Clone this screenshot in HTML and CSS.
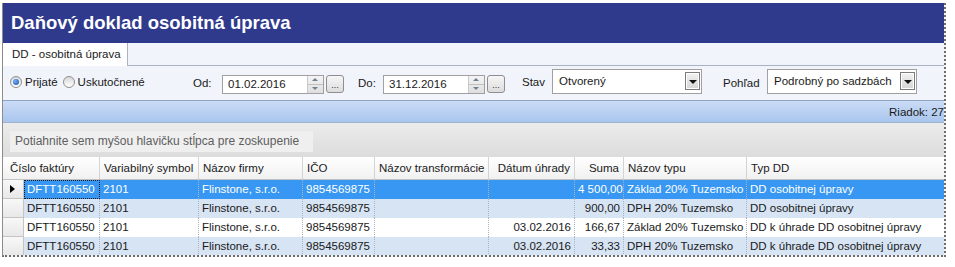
FILE: index.html
```html
<!DOCTYPE html>
<html lang="sk">
<head>
    <meta charset="UTF-8">
    <title>Daňový doklad osobitná úprava</title>
    <link rel="stylesheet" href="styles.css">
</head>
<body>
    <div class="window">
        <div class="title-bar">Daňový doklad osobitná úprava</div>

        <div class="tabs">
            <div class="tab">DD - osobitná úprava</div>
        </div>

        <div class="filters">
            <div class="radios">
                <label class="radio"><span class="dot checked"></span>Prijaté</label>
                <label class="radio"><span class="dot"></span>Uskutočnené</label>
            </div>

            <span class="lbl lbl-od">Od:</span>
            <div class="date-box">
                <span class="date-text">01.02.2016</span>
                <span class="spin"><i class="up"></i><i class="down"></i></span>
            </div>
            <button class="dots">...</button>

            <span class="lbl lbl-do">Do:</span>
            <div class="date-box">
                <span class="date-text">31.12.2016</span>
                <span class="spin"><i class="up"></i><i class="down"></i></span>
            </div>
            <button class="dots">...</button>

            <span class="lbl lbl-stav">Stav</span>
            <div class="combo">
                <span>Otvorený</span>
                <span class="drop"><i></i></span>
            </div>

            <span class="lbl lbl-pohlad">Pohľad</span>
            <div class="combo">
                <span>Podrobný po sadzbách</span>
                <span class="drop"><i></i></span>
            </div>
        </div>

        <div class="status-bar">Riadok: 27</div>

        <div class="group-panel">
            <div class="group-box">Potiahnite sem myšou hlavičku stĺpca pre zoskupenie</div>
        </div>

        <div class="grid">
            <div class="grid-head">
                <div class="hcell first">Číslo faktúry</div>
                <div class="hcell">Variabilný symbol</div>
                <div class="hcell">Názov firmy</div>
                <div class="hcell">IČO</div>
                <div class="hcell">Názov transformácie</div>
                <div class="hcell right">Dátum úhrady</div>
                <div class="hcell right">Suma</div>
                <div class="hcell">Názov typu</div>
                <div class="hcell">Typ DD</div>
            </div>

            <div class="grid-row selected">
                <div class="ind"><i class="arrow"></i></div>
                <div class="cell focus">DFTT160550</div>
                <div class="cell">2101</div>
                <div class="cell">Flinstone, s.r.o.</div>
                <div class="cell">9854569875</div>
                <div class="cell"></div>
                <div class="cell right"></div>
                <div class="cell right">4 500,00</div>
                <div class="cell">Základ 20% Tuzemsko</div>
                <div class="cell">DD osobitnej úpravy</div>
            </div>
            <div class="grid-row alt">
                <div class="ind"></div>
                <div class="cell">DFTT160550</div>
                <div class="cell">2101</div>
                <div class="cell">Flinstone, s.r.o.</div>
                <div class="cell">9854569875</div>
                <div class="cell"></div>
                <div class="cell right"></div>
                <div class="cell right">900,00</div>
                <div class="cell">DPH 20% Tuzemsko</div>
                <div class="cell">DD osobitnej úpravy</div>
            </div>
            <div class="grid-row">
                <div class="ind"></div>
                <div class="cell">DFTT160550</div>
                <div class="cell">2101</div>
                <div class="cell">Flinstone, s.r.o.</div>
                <div class="cell">9854569875</div>
                <div class="cell"></div>
                <div class="cell right">03.02.2016</div>
                <div class="cell right">166,67</div>
                <div class="cell">Základ 20% Tuzemsko</div>
                <div class="cell">DD k úhrade DD osobitnej úpravy</div>
            </div>
            <div class="grid-row alt">
                <div class="ind"></div>
                <div class="cell">DFTT160550</div>
                <div class="cell">2101</div>
                <div class="cell">Flinstone, s.r.o.</div>
                <div class="cell">9854569875</div>
                <div class="cell"></div>
                <div class="cell right">03.02.2016</div>
                <div class="cell right">33,33</div>
                <div class="cell">DPH 20% Tuzemsko</div>
                <div class="cell">DD k úhrade DD osobitnej úpravy</div>
            </div>
        </div>
    </div>
</body>
</html>
```

FILE: styles.css
```css
body {
    margin: 0;
    background-color: #ffffff;
    font-family: 'Liberation Sans', Arial, sans-serif;
    font-size: 11.5px;
    color: #1a1a1a;
}

.window {
    margin: 3px 0 0 2px;
    width: 941px;
    height: 252px;
    overflow: hidden;
    border-left: 1px solid #8c8c8c;
    border-right: 2px dotted #6d6d6d;
    border-bottom: 2px dotted #6d6d6d;
    background-color: #f1f4fa;
}

.title-bar {
    height: 40px;
    line-height: 40px;
    padding-left: 8px;
    background-color: #2f3a8d;
    color: #ffffff;
    font-size: 18.5px;
    font-weight: bold;
}

/* zalozky */
.tabs {
    display: flex;
    height: 22px;
    border-bottom: 1px solid #a9b3c4;
}

.tab {
    background-color: #ffffff;
    border-right: 1px solid #a9b3c4;
    padding: 0 6px 0 9px;
    line-height: 23px;
    height: 23px;
}

/* filtre */
.filters {
    display: flex;
    align-items: center;
    height: 34px;
    border-bottom: 1px solid #8ea3c2;
    padding-left: 7px;
}

.radios {
    display: flex;
    width: 183px;
    margin-bottom: 2px;
}

.radio {
    display: flex;
    align-items: center;
    margin-right: 5px;
}

.dot {
    width: 12px;
    height: 12px;
    border-radius: 50%;
    border: 1px solid #8f8f8f;
    background: linear-gradient(#d8d8d8, #ffffff);
    margin-right: 3px;
    box-sizing: border-box;
    position: relative;
}

.dot.checked::after {
    content: "";
    position: absolute;
    left: 2px;
    top: 2px;
    width: 6px;
    height: 6px;
    border-radius: 50%;
    background: radial-gradient(circle at 35% 35%, #6fb0ff, #1b4f9c);
}

.lbl-od { width: 29px; }
.lbl-do { width: 25px; margin-left: 14px; }
.lbl-stav { width: 30px; margin-left: 17px; margin-bottom: 2px; }
.lbl-pohlad { width: 44px; margin-left: 21px; }

.date-box {
    display: flex;
    align-items: center;
    justify-content: space-between;
    width: 102px;
    height: 19px;
    margin-top: 2px;
    border: 1px solid #a0a0a0;
    background-color: #ffffff;
    padding-left: 5px;
    box-sizing: border-box;
}

.spin {
    display: flex;
    flex-direction: column;
    width: 15px;
    height: 17px;
    border-left: 1px solid #c8c8c8;
    background: linear-gradient(#f4f4f4, #dedede);
}

.spin i {
    flex: 1;
    position: relative;
}

.spin .up { border-bottom: 1px solid #c0c0c0; }

.spin .up::after, .spin .down::after {
    content: "";
    position: absolute;
    left: 4px;
    top: 2px;
    border-left: 3px solid transparent;
    border-right: 3px solid transparent;
}

.spin .up::after { border-bottom: 3px solid #6f7f96; }
.spin .down::after { border-top: 3px solid #6f7f96; }

.dots {
    width: 18px;
    height: 18px;
    margin: 2px 0 0 2px;
    padding: 0;
    border: 1px solid #8e8e8e;
    border-radius: 3px;
    background: linear-gradient(#f6f6f6, #dcdcdc);
    font-size: 9px;
    line-height: 18px;
    color: #333;
}

.combo {
    display: flex;
    align-items: center;
    justify-content: space-between;
    width: 150px;
    height: 25px;
    margin-bottom: 4px;
    border: 1px solid #a0a0a0;
    background-color: #ffffff;
    padding-left: 6px;
    box-sizing: border-box;
}

.drop {
    width: 15px;
    height: 18px;
    margin-right: 1px;
    border: 1px solid #7b7b7b;
    box-shadow: inset 0 0 0 1px #ffffff;
    background: linear-gradient(#f2f2f2, #d5d5d5);
    position: relative;
    box-sizing: border-box;
}

.drop i {
    position: absolute;
    left: 3px;
    top: 7px;
    border-left: 4px solid transparent;
    border-right: 4px solid transparent;
    border-top: 4px solid #111;
}

/* stavovy pruh */
.status-bar {
    height: 21px;
    line-height: 23px;
    text-align: right;
    background: linear-gradient(#cadcf6, #a9c5ee);
    border-bottom: 1px solid #9fb3cf;
    white-space: nowrap;
}

.group-panel {
    height: 34px;
    padding: 8px 0 0 7px;
    box-sizing: border-box;
    background: linear-gradient(#ececec, #dcdcdc);
}

.group-box {
    display: inline-block;
    width: 303px;
    height: 21px;
    line-height: 21px;
    padding-left: 5px;
    box-sizing: border-box;
    background-color: #efefef;
    color: #5e5e5e;
    font-size: 12px;
}

/* tabulka */
.grid {
    background-color: #ffffff;
}

.grid-head, .grid-row {
    display: grid;
    grid-template-columns: 21px 76px 99px 104px 72px 114px 86px 49px 123px 198px;
}

.grid-head {
    height: 22px;
    border-bottom: 1px solid #c2c2c2;
}

.hcell {
    line-height: 22px;
    padding: 0 4px;
    background: linear-gradient(#ffffff, #f1f1f1);
    border-right: 1px solid #d4d4d4;
    white-space: nowrap;
    overflow: hidden;
}

.hcell.first {
    grid-column: span 2;
    padding-left: 7px;
}

.right { text-align: right; }

.grid-row {
    height: 19px;
}

.grid-row.alt .cell { background-color: #d7e4f4; }

.grid-row.selected .cell {
    background-color: #3797f3;
    color: #ffffff;
}

.ind {
    background: linear-gradient(#f8f8f8, #e8e8e8);
    border-right: 1px solid #c4c4c4;
    border-bottom: 1px solid #c4c4c4;
    position: relative;
}

.arrow {
    position: absolute;
    left: 7px;
    top: 5px;
    border-top: 4px solid transparent;
    border-bottom: 4px solid transparent;
    border-left: 5px solid #000;
}

.cell {
    line-height: 19px;
    padding: 0 3px;
    border-right: 1px dotted #a8b4c4;
    white-space: nowrap;
    overflow: hidden;
}

.cell.focus {
    outline: 1px dotted #1a1a1a;
    outline-offset: -1px;
}
```
